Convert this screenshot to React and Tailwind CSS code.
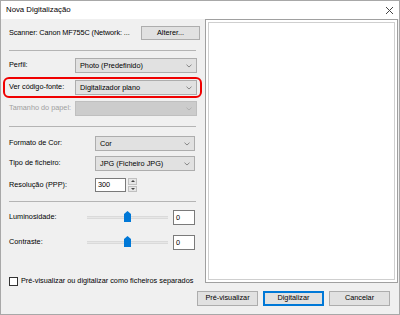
import React from "react";

const Chevron = ({ color = "#707070" }) => (
  <svg width="6" height="4" viewBox="0 0 6 4" className="shrink-0">
    <path d="M0.5 0.7 L3 3 L5.5 0.7" fill="none" stroke={color} strokeWidth="0.8" />
  </svg>
);

const Combo = ({ text, disabled, className = "" }) => (
  <div
    className={`flex items-center justify-between h-[15px] pl-[4px] pr-[4px] border ${
      disabled ? "bg-[#cccccc] border-[#bfbfbf]" : "bg-[#e1e1e1] border-[#adadad]"
    } ${className}`}
  >
    <span className="text-black leading-none">{text}</span>
    <Chevron color={disabled ? "#a8a8a8" : "#707070"} />
  </div>
);

const Sep = ({ className = "" }) => (
  <div className={`h-px bg-[#b4b4b4] ml-[8px] w-[187px] shrink-0 ${className}`} />
);

const Thumb = () => (
  <svg width="7" height="11" viewBox="0 0 7 11">
    <path d="M0 3 L3.5 0 L7 3 L7 11 L0 11 Z" fill="#0078d7" />
  </svg>
);

const SliderRow = ({ label, className = "" }) => (
  <div className={`flex items-center h-[15px] ${className}`}>
    <span className="w-[86px] pl-[8px] shrink-0">{label}</span>
    <div className="relative w-[81px] h-[15px] flex items-center">
      <div className="w-full h-[3px] bg-[#e7e7e7] border-y border-[#dadada]" />
      <div className="absolute left-[37px] top-[1px]">
        <Thumb />
      </div>
    </div>
    <div className="ml-[5px] w-[22px] h-[15px] bg-white border border-[#7a7a7a] px-[2px] flex items-center leading-none">
      0
    </div>
  </div>
);

const Btn = ({ children, primary, className = "" }) => (
  <div
    className={`h-[15px] w-[61px] flex items-center justify-center bg-[#e1e1e1] ${
      primary ? "border border-[#0078d7] shadow-[inset_0_0_0_1px_#0078d7]" : "border border-[#adadad]"
    } ${className}`}
  >
    {children}
  </div>
);

export default function App() {
  return (
    <div
      className="w-[400px] h-[315px] flex flex-col border border-[#a8a8a8] bg-[#f0f0f0] text-[7.3px] text-black overflow-hidden"
      style={{ fontFamily: '"Liberation Sans", Arial, sans-serif' }}
    >
      {/* title bar */}
      <div className="h-[18px] bg-white flex items-center justify-between pl-[5px] pr-[5px] shrink-0">
        <span className="text-[7.8px]">Nova Digitalização</span>
        <svg width="9" height="9" viewBox="0 0 9 9">
          <path d="M1 1 L8 8 M8 1 L1 8" stroke="#444" strokeWidth="1" />
        </svg>
      </div>

      <div className="flex h-[264px] shrink-0">
        {/* left column */}
        <div className="w-[203px] shrink-0 flex flex-col pt-[7px]">
          <div className="flex items-center justify-between h-[14px] pl-[8px] pr-[4px]">
            <span className="tracking-[-0.1px]">Scanner: Canon MF755C (Network: ...</span>
            <div className="w-[59px] h-[14px] bg-[#e1e1e1] border border-[#adadad] flex items-center justify-center">
              Alterer...
            </div>
          </div>

          <Sep className="mt-[10px]" />

          <div className="flex items-center mt-[7px]">
            <span className="w-[74px] pl-[8px] shrink-0">Perfil:</span>
            <Combo text="Photo (Predefinido)" className="w-[122px]" />
          </div>

          <div className="relative flex items-center mt-[7px]">
            <div className="absolute left-[2px] top-[-3px] w-[199px] h-[21px] border-2 border-[#f00000] rounded-[6px]" />
            <span className="w-[74px] pl-[8px] shrink-0">Ver código-fonte:</span>
            <Combo text="Digitalizador plano" className="w-[122px]" />
          </div>

          <div className="flex items-center mt-[6px]">
            <span className="w-[74px] pl-[8px] shrink-0 text-[#a0a0a0] whitespace-nowrap overflow-hidden">
              Tamanho do papel:
            </span>
            <Combo text="" disabled className="w-[122px]" />
          </div>

          <Sep className="mt-[10px]" />

          <div className="flex items-center mt-[9px]">
            <span className="w-[94px] pl-[8px] shrink-0">Formato de Cor:</span>
            <Combo text="Cor" className="w-[100px]" />
          </div>

          <div className="flex items-center mt-[5px]">
            <span className="w-[94px] pl-[8px] shrink-0">Tipo de ficheiro:</span>
            <Combo text="JPG (Ficheiro JPG)" className="w-[100px]" />
          </div>

          <div className="flex items-center mt-[7px]">
            <span className="w-[94px] pl-[8px] shrink-0">Resolução (PPP):</span>
            <div className="w-[31px] h-[14px] bg-white border border-[#7a7a7a] px-[2px] flex items-center leading-none">
              300
            </div>
            <div className="ml-[2px] w-[9px] h-[14px] flex flex-col gap-px">
              <div className="flex-1 bg-[#e6e6e6] border border-[#c0c0c0] flex items-center justify-center">
                <svg width="4" height="2" viewBox="0 0 4 2"><path d="M0 2 L2 0 L4 2 Z" fill="#444" /></svg>
              </div>
              <div className="flex-1 bg-[#e6e6e6] border border-[#c0c0c0] flex items-center justify-center">
                <svg width="4" height="2" viewBox="0 0 4 2"><path d="M0 0 L2 2 L4 0 Z" fill="#444" /></svg>
              </div>
            </div>
          </div>

          <Sep className="mt-[9px]" />

          <SliderRow label="Luminosidade:" className="mt-[8px]" />
          <SliderRow label="Contraste:" className="mt-[10px]" />

          <div className="flex items-center mt-[26px] pl-[8px]">
            <div className="w-[9px] h-[9px] bg-white border border-[#333] shrink-0" />
            <span className="ml-[3px]">Pré-visualizar ou digitalizar como ficheiros separados</span>
          </div>
        </div>

        {/* preview */}
        <div className="ml-[1px] w-[193px] h-[264px] border border-[#a0a0a0] bg-white p-[2px]">
          <div className="w-full h-full border border-[#cfcfcf] bg-white" />
        </div>
      </div>

      {/* buttons */}
      <div className="flex justify-end gap-[5px] pr-[9px] mt-[8px]">
        <Btn>Pré-visualizar</Btn>
        <Btn primary>Digitalizar</Btn>
        <Btn>Cancelar</Btn>
      </div>
    </div>
  );
}
